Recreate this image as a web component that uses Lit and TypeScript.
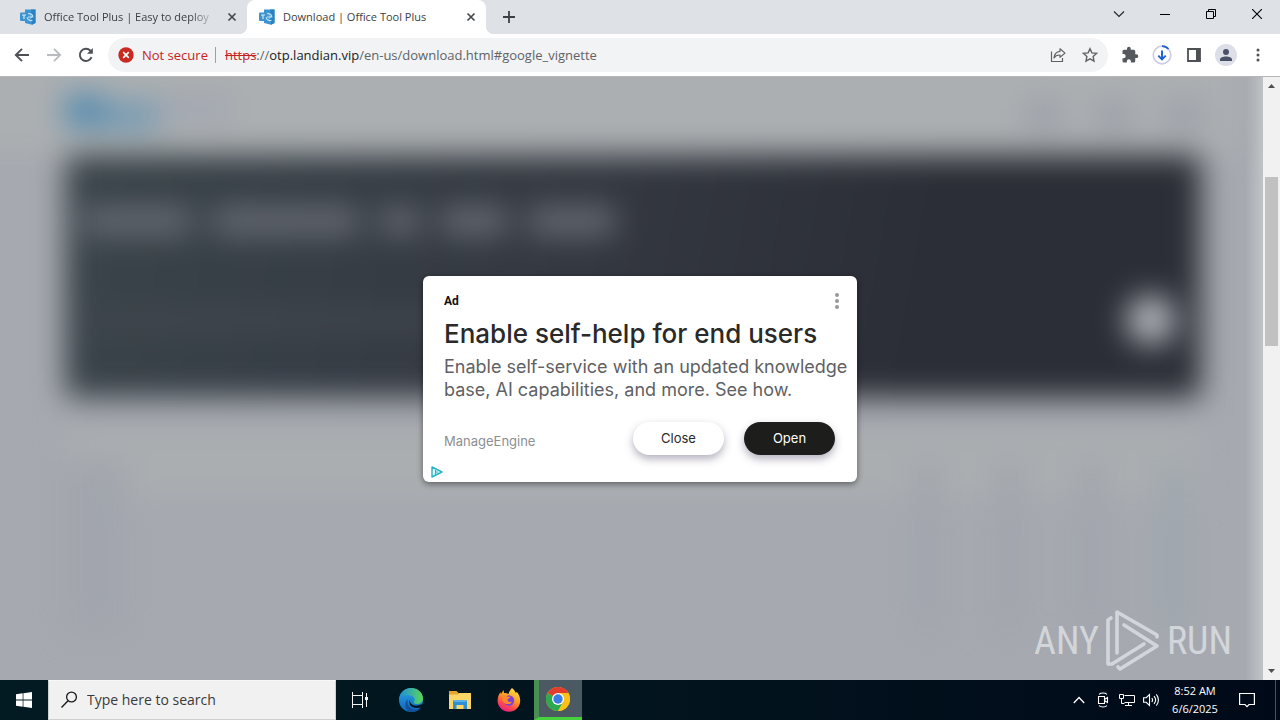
import { LitElement, html, css, svg } from "lit";
import { customElement } from "lit/decorators.js";

const favicon = html`<svg width="16" height="16" viewBox="0 0 16 16" aria-hidden="true">
  <path d="M5 0.5h10.500v13.500l-3.500 1.800-7-1.800z" fill="#3b95d2" />
  <path d="M11 0.500h4.500v13.500l-3.500 1.800z" fill="#2b82c2" />
  <rect x="0" y="3.500" width="8.500" height="8.500" rx="1" fill="#3c93ce" />
  <path d="M2 6h4M4 6v4" stroke="#cfe8f8" stroke-width="1.200" />
  <path d="M12.800 8.500A3.600 3.600 0 0 0 8 4.800M7.200 8.200a3.600 3.600 0 0 0 5.200 3" fill="none" stroke="#c4e2f5" stroke-width="1.200" />
  <path d="M8 8h3.500M10.200 6.500L11.700 8l-1.500 1.500" fill="none" stroke="#c4e2f5" />
</svg>`;

const closeMark = html`<svg width="16" height="16" viewBox="0 0 16 16" aria-hidden="true">
  <path d="M4.500 4.500l7 7M11.500 4.500l-7 7" stroke="#45494d" stroke-width="1.700" />
</svg>`;

@customElement("tab-strip")
class TabStrip extends LitElement {
  static styles = css`
    :host { display: flex; height: 34px; padding-left: 8px; background: #dee1e6; font: 11px/16px "Open Sans", sans-serif; color: #3c4043; }
    button { border: 0; padding: 0; background: none; display: grid; place-items: center; font: inherit; color: inherit; }
    .tab { position: relative; display: flex; align-items: center; gap: 8px; width: 239px; box-sizing: border-box; padding: 0 7px 0 12px; }
    .tab.active { background: #fff; border-radius: 8px 8px 0 0; }
    .tab.active::before, .tab.active::after { content: ""; position: absolute; bottom: 0; width: 8px; height: 8px; }
    .tab.active::before { right: 100%; background: radial-gradient(circle at 0 0, transparent 8px, #fff 8px); }
    .tab.active::after { left: 100%; background: radial-gradient(circle at 100% 0, transparent 8px, #fff 8px); }
    .title { flex: 1; overflow: hidden; white-space: nowrap; text-align: left; }
    .faded { -webkit-mask-image: linear-gradient(90deg, #000 85%, transparent); mask-image: linear-gradient(90deg, #000 85%, transparent); }
    .add { width: 46px; }
    .controls { display: flex; height: 28px; margin-left: auto; }
    .controls button { width: 46px; }
  `;
  render() {
    return html`
      <div class="tab">${favicon}<span class="title faded">Office Tool Plus | Easy to deploy</span><button aria-label="Close tab">${closeMark}</button></div>
      <div class="tab active">${favicon}<span class="title">Download | Office Tool Plus</span><button aria-label="Close tab">${closeMark}</button></div>
      <button class="add" aria-label="New tab"><svg width="14" height="14" viewBox="0 0 14 14"><path d="M7 1v12M1 7h12" stroke="#3c4043" stroke-width="1.800" /></svg></button>
      <div class="controls">
        <button aria-label="Search tabs"><svg width="12" height="12" viewBox="0 0 12 12"><path d="M1 3.500l5 5 5-5" fill="none" stroke="#222" stroke-width="1.100" /></svg></button>
        <button aria-label="Minimize"><svg width="10" height="10" viewBox="0 0 10 10"><path d="M0 5.500h10" stroke="#000" /></svg></button>
        <button aria-label="Restore"><svg width="10" height="10" viewBox="0 0 10 10"><path d="M.5 2.500h7v7h-7zM2.500 2.500V.5h7v7h-2" fill="none" stroke="#000" /></svg></button>
        <button aria-label="Close window"><svg width="10" height="10" viewBox="0 0 10 10"><path d="M0 0l10 10M10 0L0 10" stroke="#000" stroke-width="1.100" /></svg></button>
      </div>`;
  }
}

@customElement("tool-bar")
class ToolBar extends LitElement {
  static styles = css`
    :host { display: flex; align-items: center; height: 42px; padding: 0 6px; gap: 6px; background: #fff; border-bottom: 1px solid #b4b6b9; font: 13px/20px "Open Sans", sans-serif; }
    button { border: 0; padding: 0; background: none; width: 32px; height: 32px; display: grid; place-items: center; }
    .group { display: flex; }
    .address { flex: 1; min-width: 0; display: flex; align-items: center; height: 34px; box-sizing: border-box; padding: 0 2px 0 10px; border-radius: 17px; background: #f1f3f4; }
    .security { display: flex; align-items: center; gap: 8px; width: auto; color: #c5221f; font: inherit; }
    .rule { width: 1px; height: 16px; margin: 0 9px 0 7px; background: #9aa0a6; }
    .url { flex: 1; overflow: hidden; white-space: nowrap; color: #5f6368; outline: 0; }
    .scheme { color: #c5221f; text-decoration: line-through; }
    .host { color: #202124; }
    .avatar { width: 22px; height: 22px; border-radius: 50%; background: #dcdee8; display: grid; place-items: center; }
  `;
  render() {
    return html`
      <div class="group">
        <button aria-label="Back"><svg width="16" height="16" viewBox="0 0 16 16"><path d="M15 8H2M8 1.800L1.800 8 8 14.200" fill="none" stroke="#4d5156" stroke-width="1.900" /></svg></button>
        <button aria-label="Forward"><svg width="16" height="16" viewBox="0 0 16 16"><path d="M1 8h13M8 1.800L14.200 8 8 14.200" fill="none" stroke="#b9bbbe" stroke-width="1.800" /></svg></button>
        <button aria-label="Reload"><svg width="16" height="16" viewBox="0 0 16 16"><path d="M13.600 10.200A6.100 6.100 0 1 1 12.400 3.700L14 5.300" fill="none" stroke="#4d5156" stroke-width="1.900" /><path d="M14.800 1v5.800H9z" fill="#4d5156" /></svg></button>
      </div>
      <div class="address">
        <button class="security"><svg width="16" height="16" viewBox="0 0 16 16"><circle cx="8" cy="8" r="7.700" fill="#c9291f" /><path d="M5.200 5.200l5.600 5.600M10.800 5.200l-5.600 5.600" stroke="#fff" stroke-width="1.700" /></svg><span>Not secure</span></button>
        <span class="rule"></span>
        <div class="url" role="textbox" contenteditable="true" spellcheck="false" aria-label="Address"><span class="scheme">https</span>://<span class="host">otp.landian.vip</span>/en-us/download.html#google_vignette</div>
        <button aria-label="Share"><svg width="16" height="16" viewBox="0 0 16 16"><path d="M1.500 4.500v10h11v-3.500" fill="none" stroke="#5f6368" stroke-width="1.200" /><path d="M10 1.800l5 4.300-5 4.200V8C7 7.800 5.200 8.800 4 11c.3-4 2.300-6.300 6-6.700z" fill="none" stroke="#5f6368" stroke-width="1.200" stroke-linejoin="round" /></svg></button>
        <button aria-label="Bookmark this tab"><svg width="16" height="16" viewBox="0 0 16 16"><path d="M8 1.700l1.900 4.200 4.600.5-3.400 3.100.9 4.600L8 11.800l-4 2.300.9-4.600L1.500 6.400l4.600-.5z" fill="none" stroke="#5f6368" stroke-width="1.400" /></svg></button>
      </div>
      <div class="group">
        <button aria-label="Extensions"><svg width="18" height="18" viewBox="0 0 24 24"><path d="M20.500 11H19V7a2 2 0 0 0-2-2h-4V3.500a2.500 2.500 0 0 0-5 0V5H4a2 2 0 0 0-2 2v3.800h1.500a2.700 2.700 0 0 1 0 5.400H2V20a2 2 0 0 0 2 2h3.800v-1.500a2.700 2.700 0 0 1 5.400 0V22H17a2 2 0 0 0 2-2v-4h1.500a2.500 2.500 0 0 0 0-5z" fill="#55595e" /></svg></button>
        <button aria-label="Downloads"><svg width="20" height="20" viewBox="0 0 20 20"><circle cx="10" cy="10" r="8.800" fill="none" stroke="#cfcde6" stroke-width="1.700" /><path d="M10 1.200A8.800 8.800 0 0 1 16.500 4" fill="none" stroke="#1a62d0" stroke-width="1.800" /><path d="M10 5.500v8.500M6.300 10.600L10 14.300l3.700-3.700" fill="none" stroke="#1a62d0" stroke-width="1.900" /></svg></button>
        <button aria-label="Side panel"><svg width="14" height="14" viewBox="0 0 14 14"><path d="M1 1h12v12H1z" fill="#fff" stroke="#4d5156" stroke-width="1.800" /><path d="M9 1h4v12H9z" fill="#4d5156" /></svg></button>
        <button aria-label="Profile"><span class="avatar"><svg width="14" height="14" viewBox="0 0 14 14"><circle cx="7" cy="4" r="3" fill="#4a5068" /><path d="M1 13v-1.500C1 9.500 4 8.500 7 8.500s6 1 6 3V13z" fill="#4a5068" /></svg></span></button>
        <button aria-label="Menu"><svg width="4" height="16" viewBox="0 0 4 16"><circle cx="2" cy="3" r="1.500" fill="#4d5156" /><circle cx="2" cy="8" r="1.500" fill="#4d5156" /><circle cx="2" cy="13" r="1.500" fill="#4d5156" /></svg></button>
      </div>`;
  }
}

@customElement("ad-dialog")
class AdDialog extends LitElement {
  static styles = css`
    :host { display: block; width: 434px; box-sizing: border-box; padding: 17px 8px 2px 21px; border-radius: 6px; background: #fff; box-shadow: 0 2px 6px rgba(0, 0, 0, 0.45); font-family: Inter, sans-serif; color: #2a2a2a; }
    button { border: 0; padding: 0; background: none; font: inherit; color: inherit; }
    .top { display: flex; justify-content: space-between; align-items: center; height: 16px; padding-right: 8px; }
    .badge { font: 700 12px/16px Roboto, sans-serif; color: #111; }
    .more { display: grid; place-items: center; width: 8px; }
    h1 { margin: 8px 0 0; font: 500 26px/34px Inter, sans-serif; white-space: nowrap; }
    p { margin: 4px 0 0; font: 18px/23px Inter, sans-serif; color: #606164; }
    .actions { display: flex; gap: 20px; align-items: center; margin-top: 21px; padding-right: 14px; font: 13px/16px Inter, sans-serif; }
    .brand { margin-right: auto; padding-top: 6px; color: #8d8f92; }
    .pill { width: 91px; height: 33px; border-radius: 17px; box-shadow: 0 4px 9px rgba(40, 30, 70, 0.35); }
    .open { background: #1d1d1b; color: #fff; }
    .choices { display: block; width: 12px; height: 12px; margin: 11px 0 2px -13px; }
    .choices svg { display: block; }
  `;
  render() {
    return html`
      <div class="top"><span class="badge">Ad</span><button class="more" aria-label="More"><svg width="6" height="16" viewBox="0 0 6 16"><circle cx="3" cy="2" r="2" fill="#96989b" /><circle cx="3" cy="8" r="2" fill="#96989b" /><circle cx="3" cy="14" r="2" fill="#96989b" /></svg></button></div>
      <h1>Enable self-help for end users</h1>
      <p>Enable self-service with an updated knowledge base, AI capabilities, and more. See how.</p>
      <div class="actions"><span class="brand">ManageEngine</span><button class="pill">Close</button><button class="pill open">Open</button></div>
      <a class="choices" href="#" aria-label="Ad choices"><svg width="12" height="12" viewBox="0 0 12 12"><path d="M1 1v10l10-5z" fill="#e2f8fb" stroke="#25b5c8" stroke-width="1.400" stroke-linejoin="round" /><path d="M4.500 4v5M6 5.200v2" stroke="#25b5c8" stroke-width="1.100" /></svg></a>`;
  }
}

@customElement("page-view")
class PageView extends LitElement {
  static styles = css`
    :host { display: grid; grid-template: minmax(0, 1fr) / minmax(0, 1fr) 17px; overflow: hidden; }
    .stage { grid-area: 1 / 1; overflow: hidden; background: linear-gradient(90deg, transparent calc(100% - 18px), #c0c4c6), #a6a9b0; }
    .page { filter: blur(15px); padding: 0 62px 0 65px; }
    .head { display: flex; align-items: center; height: 78px; margin: -40px -40px 0 -110px; padding: 40px 40px 0 110px; background: #abafb1; }
    .logo { width: 38px; height: 32px; margin-top: -10px; background: #5089af; }
    .name { width: 54px; height: 26px; background: #6d98b3; }
    .tagline { width: 74px; height: 26px; margin-top: -14px; background: #a2a7b2; }
    .link { width: 34px; height: 24px; margin-left: 36px; background: #999ca8; }
    .link.first { margin-left: auto; }
    .hero { display: grid; align-content: start; height: 243px; border-radius: 8px; background: linear-gradient(100deg, #3a444a, #343841 45%, #2b2e36 75%); }
    .words { display: flex; gap: 22px; margin: 52px 0 0 18px; }
    .word { height: 28px; background: #666a72; }
    .w1 { width: 108px; } .w2 { width: 146px; } .w3 { width: 38px; } .w4 { width: 66px; } .w5 { width: 86px; }
    .sub { width: 60%; height: 18px; margin: 76px 0 0 20px; background: #42474f; }
    .round { width: 50px; height: 50px; margin: -34px 25px 0 auto; border-radius: 50%; background: #b0b3ba; }
    .rows { display: grid; grid-template-columns: 60px 1fr repeat(4, 24px); gap: 0 58px; margin-top: 30px; padding: 34px 16px 0 0; background: linear-gradient(#aaaeb0 70px, transparent 70px); }
    .col { height: 170px; background: #a1a5ad; }
    .col.blank { background: none; }
    .col.cool { background: #9da6ae; }
    .scroll { grid-area: 1 / 2; display: flex; flex-direction: column; align-items: center; background: #f1f1f1; padding: 6px 0; }
    .thumb { flex: 168; width: 13px; background: #c1c1c1; }
    .before { flex: 88; } .after { flex: 320; }
    ad-dialog { grid-area: 1 / 1 / 2 / 3; place-self: center; z-index: 2; }
    .mark { grid-area: 1 / 1 / 2 / 3; place-self: end; z-index: 1; display: flex; align-items: center; gap: 6px; margin: 0 48px 8px 0; font: 400 38px/62px "Roboto Condensed", "Open Sans Condensed", Roboto, sans-serif; color: rgba(226, 229, 232, 0.75); }
    .mark svg { display: block; }
  `;
  render() {
    return html`
      <div class="stage" aria-hidden="true"><div class="page">
        <div class="head"><div class="logo"></div><div class="name"></div><div class="tagline"></div><div class="link first"></div><div class="link"></div><div class="link"></div></div>
        <div class="hero">
          <div class="words"><div class="word w1"></div><div class="word w2"></div><div class="word w3"></div><div class="word w4"></div><div class="word w5"></div></div>
          <div class="sub"></div><div class="round"></div>
        </div>
        <div class="rows"><div class="col"></div><div class="col blank"></div><div class="col"></div><div class="col"></div><div class="col"></div><div class="col cool"></div></div>
      </div></div>
      <div class="scroll">
        <svg width="7" height="6" viewBox="0 0 7 6"><path d="M0 5h7L3.500 1z" fill="#505050" /></svg>
        <div class="before"></div><div class="thumb"></div><div class="after"></div>
        <svg width="7" height="6" viewBox="0 0 7 6"><path d="M0 1h7L3.500 5z" fill="#505050" /></svg>
      </div>
      <div class="mark"><span>ANY</span><svg width="56" height="62" viewBox="0 0 56 62" fill="none" stroke="#e2e5e8" stroke-opacity=".75" stroke-width="3.600" stroke-linecap="round" stroke-linejoin="round">
        <path d="M6 7L3 9v44l5-1 43-11M12 43V3l39 22v3M18 14l34 22v2L8 53M13 56v3l39-22" stroke="none" />
        <path d="M6 8L3 10v44h4L39 34M12 43V2l40 23v2M19 15l33 21-37 23-2-2" />
      </svg><span>RUN</span></div>
      <ad-dialog role="dialog" aria-label="Advertisement"></ad-dialog>`;
  }
}

const edge = svg`<defs><linearGradient id="ea" x1="0" y1="0" x2="1" y2="0"><stop offset="0" stop-color="#1b8fdc"/><stop offset="1" stop-color="#5ad65a"/></linearGradient><linearGradient id="eb" x1="0" y1="0" x2="0" y2="1"><stop offset="0" stop-color="#2aa6e8"/><stop offset="1" stop-color="#0f65b8"/></linearGradient></defs>
<circle cx="12" cy="12" r="12" fill="url(#eb)"/><path d="M.2 10.500C1.500 4 6.500 0 12 0c7 0 12 5 12 10.500 0 3.500-2.800 5.500-6 5.500-3 0-4-1.200-3-2.300 1.500-2 .5-5.200-3-5.900C7.500 7 2.500 7 .2 10.500z" fill="url(#ea)"/><path d="M9 11c-2 5 2 10.500 8 10.500 2 0 3.500-.5 5-1.400A12 12 0 0 1 12 24C6 23.500 4.500 15 9 11z" fill="#15509c"/><path d="M12 10c-2 1.500-1.500 4 .5 6 2.500 2.400 6.500 2 9.800.3l1.700.7-1 2c-6 1.900-11.500 1-12.500-3.400-.5-2.400 0-4.400 1.500-5.600z" fill="#04141e"/>`;

@customElement("task-bar")
class TaskBar extends LitElement {
  static styles = css`
    :host { display: flex; height: 40px; background: linear-gradient(90deg, #021a22, #02141e 50%, #000918); font: 11px/18px "Open Sans", sans-serif; color: #fff; }
    button { border: 0; padding: 0; background: none; color: inherit; font: inherit; display: grid; place-items: center; }
    .start { width: 48px; }
    .search { display: flex; align-items: center; gap: 10px; width: 288px; box-sizing: border-box; padding: 0 12px; background: #f1f1f1; border: 1px solid #cfcfcf; border-top-color: #f8f8f8; }
    .search input { flex: 1; min-width: 0; padding: 0; border: 0; outline: 0; background: none; font: 14px/20px "Open Sans", sans-serif; color: #333; }
    .search input::placeholder { color: #3a3a3a; opacity: 1; }
    .apps { display: flex; gap: 1px; }
    .apps button, .view { width: 48px; }
    .view { margin-right: 3px; }
    .apps .running { box-sizing: border-box; border-left: 5px solid #4c8c55; border-bottom: 3px solid #45d03c; padding-right: 5px; background: #4b5a62; }
    .tray { display: flex; margin-left: auto; }
    .tray button { width: 24px; }
    .tray .clock { width: 64px; text-align: center; }
    .tray .notes { width: 40px; }
    .tray .desktop { width: 5px; margin-left: 8px; border-left: 1px solid #4a5260; }
  `;
  render() {
    return html`
      <button class="start" aria-label="Start"><svg width="16" height="16" viewBox="0 0 16 16"><path d="M0 2.200l6.700-.9v6.300H0zM7.400 1.200L16 0v7.600H7.400zM0 8.400h6.700v6.300L0 13.800zM7.400 8.400H16V16l-8.600-1.200z" fill="#fff" /></svg></button>
      <label class="search"><svg width="16" height="18" viewBox="0 0 16 18"><circle cx="10.500" cy="6" r="4.900" fill="none" stroke="#1c1c1c" stroke-width="1.300" /><path d="M7 9.700L.5 16.500" stroke="#1c1c1c" stroke-width="1.400" /></svg><input type="text" placeholder="Type here to search" aria-label="Search" /></label>
      <button class="view" aria-label="Task view"><svg width="16" height="16" viewBox="0 0 16 16" fill="none" stroke="#f4f4f4"><path d="M.5 0v3.500h10V0M.5 16v-3.500h10V16M.5 3.500h10v9H.5zM14.500 1v14" /><path d="M13 5h3v3h-3z" fill="#f4f4f4" stroke="none" /></svg></button>
      <div class="apps">
        <button aria-label="Edge"><svg width="24" height="24" viewBox="0 0 24 24">${edge}</svg></button>
        <button aria-label="File Explorer"><svg width="22" height="20" viewBox="0 0 22 20"><path d="M0 1h7.500l2 2H21v4H0z" fill="#e5a430" /><path d="M0 4.500h9l1.500-1.500H22V19H0z" fill="#fcd667" /><path d="M4 10.500h14V19h-3.500v-4h-7v4H4z" fill="#2f8fd4" /><path d="M5 10h12v2H5z" fill="#57b2ea" /></svg></button>
        <button aria-label="Firefox"><svg width="24" height="24" viewBox="0 0 24 24"><defs><linearGradient id="fx" x1=".8" y1="0" x2=".3" y2="1"><stop offset="0" stop-color="#ffe94b" /><stop offset=".45" stop-color="#ff9a24" /><stop offset=".75" stop-color="#ff4650" /><stop offset="1" stop-color="#e31e87" /></linearGradient></defs><path d="M15 0c2 1.500 3 3 3.500 4.800L20 4c2 2.500 3.200 5.300 3.200 8.500A11.300 11.300 0 0 1 .6 12.500C.6 9 2 6 3.500 4.200L4 6l2.500-4L7 5c2 0 3 .2 4.500 1C12 3.500 13.500 1.500 15 0z" fill="url(#fx)" /><circle cx="12" cy="12.500" r="5.200" fill="#7a43d8" /><path d="M5.500 7.500c2.500-.8 4 0 5 1.200h3c-.5 1.500-2.500 1.600-3 3-.3 1.800 2 3 4.500 2-1 3-7 3.500-9-.5-1-2-1-4-.5-5.700z" fill="#ff8a2a" /></svg></button>
        <button class="running" aria-label="Chrome"><svg width="24" height="24" viewBox="0 0 24 24"><circle cx="12" cy="12" r="12" fill="#fbc116" /><path d="M12 12L1.600 6A12 12 0 0 1 22.400 6z" fill="#e33b2e" /><path d="M12 12L1.600 6A12 12 0 0 0 12 24l5.200-9z" fill="#2da94f" /><path d="M12 6h10.400A12 12 0 0 1 12 24l5.200-9z" fill="#fbc116" /><circle cx="12" cy="12" r="6" fill="#fff" /><circle cx="12" cy="12" r="4.700" fill="#3a7de8" /></svg></button>
      </div>
      <div class="tray">
        <button aria-label="Show hidden icons"><svg width="12" height="8" viewBox="0 0 12 8"><path d="M.8 7L6 1.500 11.200 7" fill="none" stroke="#fff" stroke-width="1.300" /></svg></button>
        <button aria-label="Meet now"><svg width="12" height="16" viewBox="0 0 12 16" fill="none" stroke="#fff" stroke-width="1.100"><path d="M1.500 4.500h6v7h-6zM7.500 7.500l3-2v5l-3-2M2 2.300C4 .5 8 .5 10 2.300M2 13.700c2 1.800 6 1.800 8 0" /></svg></button>
        <button aria-label="Network"><svg width="16" height="14" viewBox="0 0 16 14" fill="none" stroke="#fff"><path d="M5.500 2.500h10v7h-10M9.500 9.500v3M6 12.500h7M.5 1.500h4v4h-4zM2.500 5.500v5h3" /></svg></button>
        <button aria-label="Volume"><svg width="17" height="14" viewBox="0 0 17 14" fill="none" stroke="#fff" stroke-width="1.100"><path d="M.6 4.700h2.600L6.500 1.500v11L3.200 9.300H.6zM8.800 5c1 1.200 1 2.800 0 4M11 3.200c1.900 2.200 1.900 5.400 0 7.600M13.300 1.300c2.800 3.300 2.800 8.100 0 11.400" /></svg></button>
        <button class="clock"><span>8:52 AM<br />6/6/2025</span></button>
        <button class="notes" aria-label="Notifications"><svg width="16" height="16" viewBox="0 0 16 16"><path d="M.6 1.500h14.800v11H10L8 14.700 6 12.500H.6z" fill="none" stroke="#fff" stroke-width="1.200" /></svg></button>
        <button class="desktop" aria-label="Show desktop"></button>
      </div>`;
  }
}

@customElement("app-root")
class AppRoot extends LitElement {
  static styles = css`
    :host { display: flex; flex-direction: column; height: 100vh; min-height: 480px; overflow: hidden; }
    page-view { flex: 1; min-height: 0; }
    tab-strip, tool-bar, task-bar { flex: none; }
  `;
  render() {
    return html`<tab-strip></tab-strip><tool-bar></tool-bar><page-view></page-view><task-bar></task-bar>`;
  }
}
